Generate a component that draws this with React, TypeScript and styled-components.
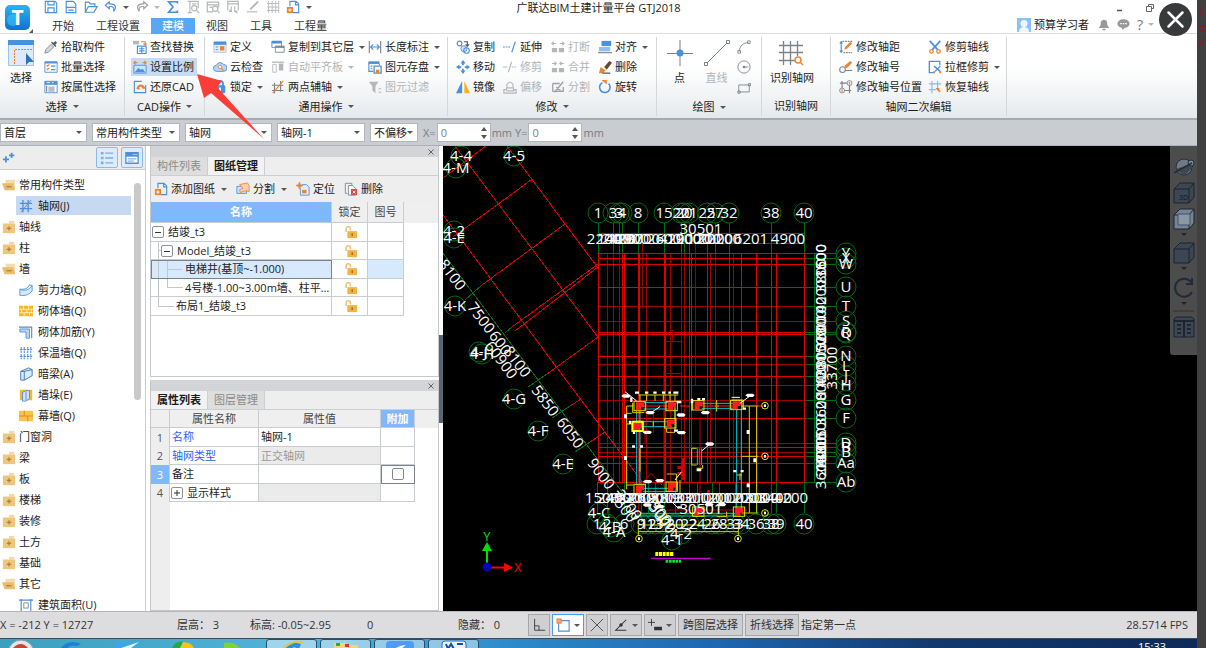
import React from 'react';
import styled, { createGlobalStyle, css } from 'styled-components';

const BLUE = '#4a90dc';
const ORANGE = '#f08331';
const GREY = '#7b838b';
const PALE = '#b4b7ba';

const GlobalStyle = createGlobalStyle`
  * { box-sizing: border-box; }
  body {
    margin: 0;
    background: #404040;
    color: #1c1c1c;
    font-family: "Open Sans", "Noto Sans CJK SC", sans-serif;
    font-size: 11px;
    line-height: 16px;
  }
  button, input, select {
    font: inherit;
    color: inherit;
    margin: 0;
    padding: 0;
    border: 0;
    background: none;
  }
  svg { display: block; flex: none; }
`;

/* ---------- icons ---------- */

const S = (p: React.SVGProps<SVGPathElement>) => <path fill="none" stroke={BLUE} strokeWidth="1.3" {...p} />;

const icons: Record<string, React.ReactNode> = {
  save: <><S d="M1.500 1.500h11l2 2v11h-13zM4.500 1.500v4h7v-4M4.500 14v-5h7v5" /></>,
  doc: <><S d="M2.500 14.500v-13h8l3 3v10zM2.500 8.500h11M5 11.500h6" /></>,
  open: <><S d="M1.500 14V2.500h4l2 2h5v3M1.500 14h10l3.500-6.500H5z" /></>,
  undo: <><S d="M6 2L1.500 6 6 10V7.500c5-.5 6 2 5 5.500 4-5 2-9-5-8.500z" /></>,
  redo: <><S stroke="#999da1" d="M10 2l4.500 4L10 10V7.500c-5-.5-6 2-5 5.500-4-5-2-9 5-8.500z" /></>,
  sum: <S strokeWidth="1.900" d="M13 4V2H3l5 6-5 6h10v-2" />,
  view1: <><S stroke={PALE} d="M2 1.500h12v8M4.500 1.500v13M2 14.500h5M7 4.500h5" /><circle cx="9.500" cy="9.500" r="3" fill="none" stroke={PALE} strokeWidth="1.300" /><S stroke={PALE} d="M12 12l3 3" /></>,
  view2: <><S stroke={PALE} d="M8 13.500H1.500v-11h13v6M1.500 5.500h13M4 8.500h3" /><circle cx="10.500" cy="10" r="3" fill="none" stroke={PALE} strokeWidth="1.300" /><S stroke={PALE} d="M13 12l2.500 3" /></>,
  view3: <><S stroke={PALE} d="M2 12V1.500h12V12M2 4.500h12M6 7v6H3.500M6 13l-2-2M10 7v6h3M10 13l3 2" /></>,
  pencil: <><path d="M5 9l8-8 1.500 1.500-8 8-2.500 1z" fill={PALE} /><S stroke={PALE} d="M1 13.500h12" /></>,
  mesh: <S stroke={PALE} strokeWidth="1" d="M3 1v14M7 1v14M11 1v14M14.500 1v14M1 4h14M1 8h14M1 12h14" />,
  addDoc: <><S d="M4.500 7V1.500h7l3 3v10H8M11 1.500v4h3" /><path d="M1 8h7v7H1z" fill={ORANGE} /><path d="M4.500 9.500v4M2.500 11.500h4" stroke="#fff" /></>,
  picker: <><path d="M1 15l1-4 6-6 3 3-6 6z" fill="#d4d8dc" stroke={GREY} /><path d="M8 3l5 5 1-1-1-2 2-2-2-2-2 2-2-1z" fill="#555b62" /></>,
  list: <><path d="M1 2h14v12H1z" fill="#fff" stroke={BLUE} /><path d="M1 2h14v2H1z" fill={BLUE} /><S stroke={ORANGE} d="M3 6l1 1 2-2M3 10l1 1 2-2" /><S d="M8 7h5M8 11h5" /></>,
  attr: <><path d="M1 1.500h14v13H1z" fill="#fff" stroke={BLUE} /><path d="M1 1.500h14v4H1z" fill={BLUE} /><path d="M3 3h4M9 3h2" stroke="#fff" /><path d="M5 7.500h7v6H5z" fill="#b9bec3" /><S stroke={GREY} d="M3 6.500v7" /></>,
  find: <><path d="M0 1h7v4H0z" fill={PALE} /><S stroke={ORANGE} d="M9 2h5v4M12 4l2 2 1.500-2" /><S d="M5 7h10v8.500H5zM7 10h6M7 12.500h6M10 8v7" /></>,
  scale: <><S stroke={ORANGE} d="M1 3h4M3 1L1 3l2 2M15 3h-4M13 1l2 2-2 2" /><path d="M1 6h14v9H1z" fill="#cde2fa" stroke={BLUE} /><path d="M2 14l4-5 3 2 2-1 3 4z" fill={BLUE} /></>,
  restore: <><S d="M10 1.500H1.500v13h13V6" /><path d="M4 10a5 5 0 0110 0h-3a3 3 0 00-4-2l1 3-5-1z" fill={ORANGE} /></>,
  define: <><path d="M1 2h14v12H1z" fill="#e7f1fc" stroke="#9fc5ee" /><path d="M1 2h14v3.500H1z" fill={BLUE} /><path d="M8 7h5v5H8z" fill={ORANGE} /><S strokeWidth="1" d="M3 8h3M3 11h3" /></>,
  cloud: <><path d="M4 13a3.500 3.500 0 010-7 4.500 4.500 0 018-1 4 4 0 010 8z" fill="#b7d5f6" stroke={BLUE} /><circle cx="8" cy="8" r="2" fill="#fff" stroke={ORANGE} /><S stroke={ORANGE} d="M9.500 9.500L12 12" /></>,
  lock: <><S strokeWidth="2" d="M4.500 7V4.500a3.500 3.500 0 017 0V7" /><rect x="2" y="6" width="12" height="9" rx="1.500" fill={BLUE} /><path d="M8 8.500v4" stroke="#fff" strokeWidth="2" /></>,
  copyLayer: <><path d="M1 1.500h11v7H1z" fill="#fff" stroke={BLUE} /><path d="M1 1h11v3H1z" fill={BLUE} /><path d="M5 7h10v7H5z" fill="#fff" stroke={GREY} /><path d="M5 7h10v2H5z" fill={GREY} /></>,
  alignSlab: <><path d="M1 2.500h14" stroke={PALE} strokeWidth="1.500" /><path d="M2 5h4v9H2z" fill="none" stroke={PALE} /><path d="M9 4h5v8H9z" fill={PALE} /></>,
  auxAxis: <><S stroke={GREY} d="M4 3v12M11 1v12M1 6h13M1 12h13" /><S stroke={ORANGE} d="M2 15L14 1" /></>,
  length: <><S stroke={GREY} d="M1.500 1v14M14.500 1v14" /><S d="M3 8h10M6 5L3 8l3 3M10 5l3 3-3 3" /></>,
  saveElem: <><path d="M1 1.500h12v3H1z" fill={BLUE} /><S d="M1 2v11h5M13 4v2M3 7h2M3 10h2" /><path d="M7 7h8v8H7z" fill="#fff" stroke={BLUE} strokeWidth="1.500" /><path d="M9 11h4v4H9z" fill={ORANGE} /></>,
  filter: <><path d="M1 2h11L8.500 7v8L5 12V7z" fill={PALE} /><S stroke={PALE} d="M12 10h3M12 14h3" /></>,
  copy: <><circle cx="4" cy="4" r="2.700" fill="none" stroke={GREY} strokeWidth="1.300" /><S stroke="#555" d="M9 2h4v4M11 5l2 2 2-2" /><circle cx="9" cy="10" r="3.500" fill="#cfe3f9" stroke={BLUE} /><circle cx="12" cy="12" r="3.200" fill="none" stroke={BLUE} strokeWidth="1.300" /></>,
  move: <path d="M8 0l3 4H9v2H7V4H5zM8 16l3-4H9v-2H7v2H5zM0 8l4-3v2h2v2H4v2zM16 8l-4-3v2h-2v2h2v2z" fill={BLUE} />,
  mirror: <><path d="M7 1v14H0z" fill={BLUE} /><path d="M9.500 1v14H16z" fill="#ffb21c" /></>,
  extend: <><S strokeDasharray="2 1" d="M0 8h9" /><S stroke={BLUE} d="M10 14l4-12" /></>,
  trim: <><S stroke={PALE} d="M0 8h5M6 14l4-12" /><S stroke={PALE} strokeDasharray="2 1" d="M10 8h6" /></>,
  offset: <><S stroke={PALE} d="M5 8a3.500 3.500 0 116 0M1 11h3V9h8v2h3v4H1zM4 12.500h9" /></>,
  breakIt: <><path d="M1 9h6v5H1zM9 9h6v5H9z" fill={PALE} /><S stroke={PALE} d="M1 4h5M3 2L1 4l2 2M15 4h-5M13 2l2 2-2 2" /></>,
  merge: <><path d="M1 9h6v5H1zM9 9h6v5H9z" fill={PALE} /><S stroke={PALE} d="M1 4h5M4 2l2 2-2 2M15 4h-5M12 2l-2 2 2 2" /></>,
  split: <><S stroke="#9da1a5" strokeWidth="1.500" d="M2 4h8M2 4v9M2 13h12V8M4 14L14 2M6 8l5 4" /></>,
  alignTo: <><path d="M4 1h11v6H4z" fill={BLUE} /><path d="M1 8h13v5H1z" fill="#90bff2" /><S stroke={GREY} d="M0 14.500h16" /></>,
  erase: <><path d="M7 8l6-7 3 2-6 8z" fill="#6e4529" /><path d="M3 8l6 4-4 3H1z" fill={ORANGE} /><S stroke="#444" d="M5 15h9" /></>,
  rotate: <><S strokeWidth="1.800" d="M5 3a6 6 0 107 1" /><path d="M4 0h6v5z" fill={ORANGE} /></>,
  arc: <><S stroke={GREY} strokeWidth="1" d="M2.500 13C3 7 7 3 13 3M1 12h3v3H1zM12 1h3v3h-3z" /></>,
  circle: <><circle cx="8" cy="8" r="7" fill="none" stroke={GREY} /><circle cx="8" cy="8" r="1.500" fill={GREY} /><S stroke={GREY} strokeWidth="1" d="M8 8h5" /></>,
  rect: <S stroke={GREY} strokeWidth="1" d="M2 4.500h12v8H2zM1 11.500h2.500V14H1zM13 3h2.500v2.500H13z" />,
  axisDist: <><S d="M2.500 2v12M1 4l1.500-2L4 4M1 12l1.500 2L4 12" /><S stroke={GREY} strokeDasharray="2 1" d="M4 1.500h11M5 14.500h10" /><path d="M6 11l1-3 6-6 2 2-6 6z" fill={ORANGE} /></>,
  axisNo: <><circle cx="4" cy="11" r="3.200" fill="none" stroke={GREY} strokeWidth="1.200" /><S stroke={GREY} d="M7 12h8" /><path d="M6 9l1-3 6-5 2 2-6 6z" fill={ORANGE} /></>,
  axisPos: <><circle cx="3.500" cy="12" r="2.800" fill="none" stroke={GREY} /><circle cx="12" cy="3.500" r="2.800" fill="none" stroke={GREY} /><path d="M3.500 10.500v3M12 2v3" stroke={ORANGE} strokeWidth="1.500" /><S stroke={GREY} d="M3.500 9V1M1 3.500h8M6 12h8M12 6v9" /></>,
  scissors: <><S strokeWidth="2" d="M2 1l9 10M14 1L5 11" /><circle cx="4" cy="13" r="2" fill="none" stroke={ORANGE} strokeWidth="1.500" /><circle cx="12" cy="13" r="2" fill="none" stroke={ORANGE} strokeWidth="1.500" /></>,
  boxTrim: <><S strokeWidth="1.500" d="M7 14.500H1.500v-13h12V6" /><S stroke={BLUE} strokeWidth="1.600" d="M7 7l7 6M14 7l-6 6" /><circle cx="7" cy="14" r="1.300" fill={ORANGE} /><circle cx="14" cy="14" r="1.300" fill={ORANGE} /></>,
  axisBack: <><S stroke="#8fb8e4" d="M4.500 1v14M11 1v8M1 4.500h14M1 11h8" /><path d="M9 9h4v3h2l-2 2-4-4z" fill={ORANGE} /></>,
  axis: <><S strokeWidth="1.500" d="M4.500 1v14M10.500 1v14M1 5h14M1 11h14" /><S stroke={GREY} strokeWidth="1" d="M2 15L14 1" /></>,
  folder: <><path d="M8 1h6v3H8z" fill="#f3d9a4" /><path d="M1 4h14v11H1z" fill="#eec67e" /><path d="M8 7v5M5.500 9.500h5" stroke="#a9813d" strokeWidth="1.400" /></>,
  folderOpen: <><path d="M4 2h11v11H4z" fill="#f4dcae" /><path d="M0 6h13l2 8H3z" fill="#e9bd6f" /><path d="M5 10h6" stroke="#a9813d" strokeWidth="1.400" /></>,
  wall: <path d="M1 7c6 1 9-1 11-5l3 1v6c-3 4-7 6-14 5zM1 7l2 1c6 1 9-1 12-5" fill="#d9e9fb" stroke={BLUE} />,
  brick: <><path d="M0 2h16v12H0z" fill="#fbb423" /><path d="M0 6h16M0 10h16M5 2v4M11 2v4M3 6v4M9 6v4M14 6v4M6 10v4M12 10v4" stroke="#fff2cf" /></>,
  rebar: <><S stroke={GREY} d="M0 2.500h14.500V15" /><path d="M1 4.500h11V15H8V8H1z" fill="#b9d6f7" stroke={BLUE} /></>,
  insul: <S strokeWidth="1.200" strokeDasharray="3 1" d="M2.500 1v14M6 1v14M10 1v14M13.500 1v14M1 4h14M1 12h14" />,
  beam: <><path d="M2 5l9-4 4 2v7l-9 5H2z" fill="#dcebfc" stroke="#356fae" /><path d="M2 5h4l9-2M6 5v10" fill="none" stroke="#356fae" /></>,
  pier: <><path d="M1 2h14v12H1z" fill="#fbb423" /><path d="M4 5l4-2h4v9l-4 3H4z" fill="#cde2fa" stroke={BLUE} /><path d="M8 4v10" stroke={BLUE} /></>,
  curtain: <><path d="M0 2h16v12H0z" fill="#fbc34c" /><path d="M0 8h16M6 2v6M10 8v6" stroke="#d58b12" /></>,
  area: <><S d="M2.500 1v14M13.500 1v14M0 2.500h16" /><S stroke={GREY} strokeWidth="1" d="M5.500 5.500h5v6h-5z" /></>,
  splitDoc: <><path d="M1 5h11v8H1z" fill="#cfe3f9" stroke={BLUE} /><path d="M4 3l9-2 2 3v7l-4-1-6 2-1-3 4-2z" fill="#fbd0ad" stroke={ORANGE} /></>,
  locate: <><path d="M7 3h5l3 3v9H5V7" fill="#e2eefc" stroke={BLUE} /><path d="M4 0l1 3 3 1-3 1-1 3-1-3-3-1 3-1z" fill={ORANGE} stroke={ORANGE} /><path d="M7 9h5v4H7z" fill={ORANGE} /></>,
  delDoc: <><path d="M4 13H1.500V1.500H9V4M5 4h5l3 3v8H5z" fill="#f2f4f6" stroke={GREY} /><path d="M8 8h7v7H8z" fill="#d94b4b" /><path d="M10 10l3 3M13 10l-3 3" stroke="#fff" /></>,
  unlock: <><path d="M3.500 8V4.500a2.500 2.500 0 015 0V6" fill="none" stroke="#eebf76" strokeWidth="1.700" /><path d="M5 7h11v8H5z" fill="#f2b347" /><path d="M10.500 9.500v3" stroke="#976011" strokeWidth="1.500" /></>,
  add: <path d="M4.500 6v7M1 9.500h7M11 2v6M8 5h6" stroke={BLUE} strokeWidth="2" />,
  bell: <><path d="M8 1c-4 0-4.500 4-4.500 7L1 12h14l-2.500-4C12.500 5 12 1 8 1z" fill="#999" /><path d="M6 13h4v2H6z" fill="#999" /></>,
  chat: <><ellipse cx="8" cy="7" rx="7.500" ry="5.500" fill="#999" /><path d="M6 11h4l-3 4z" fill="#999" /><path d="M4 7h2M7 7h2M10 7h2" stroke="#fff" strokeWidth="1.500" /></>,
  listView: <><path d="M1 1h3v3H1zM1 6.500h3v3H1zM1 12h3v3H1z" fill="#76aef0" /><path d="M6 2.500h9M6 8h9M6 13.500h9" stroke="#76aef0" strokeWidth="1.500" /></>,
  winView: <><path d="M1 2h14v12H1z" fill="#fff" stroke={BLUE} strokeWidth="1.500" /><path d="M1 2h14v4.500H1z" fill={BLUE} /><path d="M9 4h1M11 4h1M13 4h1" stroke="#fff" /><S d="M3 9h10M3 11.500h7" strokeWidth="1" /></>,
  ortho: <path d="M3 1v13h12M3 9h5v5" fill="none" stroke="#333" />,
  snapRect: <><path d="M3 3h12v12H3z" fill="#fff" stroke={BLUE} strokeWidth="1.300" /><path d="M1 1h5v5H1z" fill="#f3a276" stroke={ORANGE} /></>,
  crossX: <path d="M1 1l14 14M15 1L1 15" stroke="#444" />,
  angle: <><path d="M14 2L2 14h12" fill="none" stroke="#333" strokeWidth="1.200" /><circle cx="8" cy="8" r="2" fill="#333" /></>,
  plusMinus: <><path d="M4 1v8M0 5h8" stroke="#333" /><path d="M7 10h9v4H7z" fill="#333" /></>,
};

const Icon = ({ name, size = 14 }: { name: string; size?: number }) => (
  <svg width={size} height={size} viewBox="0 0 16 16" aria-hidden="true">{icons[name]}</svg>
);

const Caret = styled.span<{ $color?: string }>`
  flex: none;
  width: 0;
  height: 0;
  border: 3px solid transparent;
  border-top-color: ${p => p.$color || '#555'};
  border-bottom: 0;
`;

/* ---------- shell ---------- */

const Page = styled.div`
  position: relative;
  display: flex;
  height: 100vh;
  overflow: hidden;
  white-space: nowrap;
`;
const Backdrop = styled.aside`
  flex: 0 0 9px;
  overflow: hidden;
  background: #404040;
`;
const Program = styled.main`
  flex: 1;
  min-width: 0;
  display: flex;
  flex-direction: column;
  background: #fff;
`;

/* ---------- title and menu ---------- */

const Header = styled.header`
  flex: none;
  display: grid;
  grid-template-columns: minmax(0, 1fr) auto minmax(0, 1fr);
  height: 34px;
  border-bottom: 1px solid #d9dcdf;
`;
const Brand = styled.div`
  display: flex;
`;
const Logo = styled.svg`
  margin-right: 3px;
`;
const Stack = styled.div`
  display: flex;
  flex-direction: column;
  justify-content: space-between;
`;
const QuickBar = styled.div`
  display: flex;
  align-items: center;
  gap: 6px;
  height: 14px;
  padding-left: 3px;
`;
const IconButton = styled.button`
  display: flex;
  align-items: center;
  gap: 5px;
`;
const HelpButton = styled(IconButton)`
  color: #777;
  font-size: 14px;
`;
const Menu = styled.nav`
  display: flex;
`;
const MenuTab = styled.button<{ $active?: boolean }>`
  height: 16px;
  padding: 0 11px;
  color: ${p => (p.$active ? '#fff' : '#333')};
  background: ${p => (p.$active ? '#5aa7f7' : 'transparent')};
`;
const Title = styled.h1`
  margin: 0;
  font-size: 11px;
  line-height: 15px;
  font-weight: 400;
`;
const Account = styled.div`
  display: flex;
  flex-direction: column;
  align-items: flex-end;
  gap: 2px;
  padding-right: 43px;
`;
const AccountRow = styled.div`
  display: flex;
  align-items: center;
  gap: 7px;
  height: 15px;
`;
const User = styled.button`
  display: flex;
  align-items: center;
  gap: 3px;
  margin-right: 2px;
`;

const quick = ['save', 'doc', 'open', 'undo', 'redo', 'sum', 'view1', 'view2', 'view3', 'pencil', 'mesh', 'addDoc'];
const menu = ['开始', '工程设置', '建模', '视图', '工具', '工程量'];

const TopBar = () => (
  <Header>
    <Brand>
      <Logo width="38" height="34" viewBox="0 0 38 34" role="img" aria-label="GTJ">
        <defs>
          <linearGradient id="logo" x1="0" y1="0" x2="0" y2="1">
            <stop offset="0" stopColor="#25b6f3" />
            <stop offset="1" stopColor="#146fd0" />
          </linearGradient>
        </defs>
        <rect x="5" y="5" width="25" height="25" rx="5" fill="url(#logo)" />
        <circle cx="13" cy="20" r="6" fill="#39c6f6" opacity=".6" />
        <text x="17.500" y="25" textAnchor="middle" fontSize="21" fontWeight="700" fill="#fff">T</text>
        <path d="M33 29v4h-4z" fill="#555" />
      </Logo>
      <Stack>
        <QuickBar>
          {quick.map(n => (
            <IconButton key={n} aria-label={n}>
              <Icon name={n} />
              {(n === 'undo' || n === 'redo') && <Caret $color={n === 'redo' ? PALE : '#555'} />}
            </IconButton>
          ))}
          <Caret />
        </QuickBar>
        <Menu>{menu.map(m => <MenuTab key={m} $active={m === '建模'}>{m}</MenuTab>)}</Menu>
      </Stack>
    </Brand>
    <Title>广联达BIM土建计量平台 GTJ2018</Title>
    <Account>
      <AccountRow>
        <IconButton aria-label="最小化"><svg width="22" height="12"><path d="M0 8.500h5" stroke="#555" strokeWidth="1.500" /></svg></IconButton>
        <IconButton aria-label="还原"><svg width="8" height="8"><path d="M2.500 2V.5h5v4H6M.5 2.500h5v5h-5z" fill="none" stroke="#666" /></svg></IconButton>
      </AccountRow>
      <AccountRow>
        <User>
          <svg width="14" height="14"><rect width="14" height="14" fill="#8cc1f5" /><circle cx="7" cy="5.500" r="3.500" fill="#eef7ff" /><path d="M2 14q0-5 5-5t5 5z" fill="#eef7ff" /></svg>
          预算学习者
        </User>
        <Icon name="bell" size={12} />
        <Icon name="chat" size={13} />
        <HelpButton aria-label="帮助">?<Caret $color={PALE} /></HelpButton>
      </AccountRow>
    </Account>
  </Header>
);

/* ---------- ribbon ---------- */

const RibbonBar = styled.section`
  flex: none;
  display: flex;
  height: 86px;
  padding: 3px 0 2px;
  background: linear-gradient(#fff 40%, #e6e9ec);
  border-bottom: 2px solid #a5aaaf;
`;
const Group = styled.div<{ $width: number }>`
  flex: 0 0 ${p => p.$width}px;
  display: flex;
  flex-direction: column;
  border-right: 1px solid #d5d8db;
`;
const GroupBody = styled.div<{ $pad: number }>`
  display: flex;
  height: 61px;
  padding-left: ${p => p.$pad}px;
`;
const GroupName = styled.div`
  display: flex;
  align-items: center;
  justify-content: center;
  gap: 5px;
  height: 20px;
`;
const ToolGrid = styled.div<{ $cols: string }>`
  display: grid;
  grid-auto-flow: column;
  grid-template-rows: repeat(3, 20px);
  grid-template-columns: ${p => p.$cols};
`;
const ToolButton = styled.button<{ $active?: boolean }>`
  display: flex;
  align-items: center;
  justify-self: start;
  align-self: center;
  gap: 3px;
  height: 18px;
  padding: 0 3px 0 2px;
  ${p => p.$active && css`background: #c8dbf3;`}
  &:disabled { color: #b2b4b6; }
  & > ${Caret} { margin-left: 2px; }
`;
const BigButton = styled.button<{ $width: number }>`
  display: flex;
  flex-direction: column;
  align-items: center;
  justify-content: space-between;
  width: ${p => p.$width}px;
  height: 49px;
  padding-top: 3px;
  &:disabled { color: #b2b4b6; }
`;
const ShapeColumn = styled.div`
  display: flex;
  flex-direction: column;
  justify-content: space-around;
  height: 61px;
  padding-left: 2px;
`;

type ToolDef = [icon: string, label: string, flags?: string];
const Tools = ({ cols, items }: { cols: string; items: ToolDef[] }) => (
  <ToolGrid $cols={cols}>
    {items.map(([icon, label, f = '']) => (
      <ToolButton key={label} disabled={f.includes('x')} $active={f.includes('a')}>
        <Icon name={icon} />
        {label}
        {f.includes('d') && <Caret $color={f.includes('x') ? PALE : '#555'} />}
      </ToolButton>
    ))}
  </ToolGrid>
);

const Ribbon = () => (
  <RibbonBar>
    <Group $width={125}>
      <GroupBody $pad={0}>
        <BigButton $width={42}>
          <svg width="26" height="27" viewBox="0 0 26 27">
            <path d="M.5.500h25v25H.500z" fill="#dceafb" stroke="#9ec4ee" /><path d="M0 0h26v5H0z" fill={BLUE} />
            <path d="M6.500 24V9.500H25" fill="none" stroke={ORANGE} strokeDasharray="2 1" /><path d="M18 13v12l3-3h5z" fill="#2f73bd" />
          </svg>
          选择
        </BigButton>
        <Tools cols="80px" items={[['picker', '拾取构件'], ['list', '批量选择'], ['attr', '按属性选择']]} />
      </GroupBody>
      <GroupName>选择 <Caret /></GroupName>
    </Group>
    <Group $width={80}>
      <GroupBody $pad={6}>
        <Tools cols="70px" items={[['find', '查找替换'], ['scale', '设置比例', 'a'], ['restore', '还原CAD']]} />
      </GroupBody>
      <GroupName>CAD操作 <Caret /></GroupName>
    </Group>
    <Group $width={243}>
      <GroupBody $pad={6}>
        <Tools
          cols="58px 97px 78px"
          items={[
            ['define', '定义'], ['cloud', '云检查'], ['lock', '锁定', 'd'],
            ['copyLayer', '复制到其它层', 'd'], ['alignSlab', '自动平齐板', 'xd'], ['auxAxis', '两点辅轴', 'd'],
            ['length', '长度标注', 'd'], ['saveElem', '图元存盘', 'd'], ['filter', '图元过滤', 'x'],
          ]}
        />
      </GroupBody>
      <GroupName>通用操作 <Caret /></GroupName>
    </Group>
    <Group $width={208}>
      <GroupBody $pad={6}>
        <Tools
          cols="47px 48px 47px 60px"
          items={[
            ['copy', '复制'], ['move', '移动'], ['mirror', '镜像'],
            ['extend', '延伸'], ['trim', '修剪', 'x'], ['offset', '偏移', 'x'],
            ['breakIt', '打断', 'x'], ['merge', '合并', 'x'], ['split', '分割', 'x'],
            ['alignTo', '对齐', 'd'], ['erase', '删除'], ['rotate', '旋转'],
          ]}
        />
      </GroupBody>
      <GroupName>修改 <Caret /></GroupName>
    </Group>
    <Group $width={105}>
      <GroupBody $pad={4}>
        <BigButton $width={37}>
          <svg width="26" height="27"><path d="M13 0v26M0 13.500h26" stroke={GREY} /><circle cx="13" cy="13" r="3.500" fill={BLUE} /></svg>
          点
        </BigButton>
        <BigButton $width={37} disabled>
          <svg width="26" height="27"><path d="M3 23L23 3M.5 22.500h3v3h-3zM22.500.500h3v3h-3z" stroke={GREY} fill="#fff" /></svg>
          直线
        </BigButton>
        <ShapeColumn>
          {[['arc', '圆弧'], ['circle', '圆'], ['rect', '矩形']].map(([n, l]) => <IconButton key={n} aria-label={l}><Icon name={n} /></IconButton>)}
        </ShapeColumn>
      </GroupBody>
      <GroupName>绘图 <Caret /></GroupName>
    </Group>
    <Group $width={69}>
      <GroupBody $pad={4}>
        <BigButton $width={52}>
          <svg width="26" height="27">
            <path d="M4.500 1v24M11.500 1v24M18.500 1v15M0 5.500h24M0 12.500h24M0 20.500h16" stroke={GREY} fill="none" strokeWidth="1.300" />
            <circle cx="19" cy="20" r="3" fill="none" stroke={ORANGE} strokeWidth="1.500" /><path d="M21 22l3 3" stroke={ORANGE} strokeWidth="1.500" />
          </svg>
          识别轴网
        </BigButton>
      </GroupBody>
      <GroupName>识别轴网</GroupName>
    </Group>
    <Group $width={176}>
      <GroupBody $pad={6}>
        <Tools
          cols="89px 78px"
          items={[
            ['axisDist', '修改轴距'], ['axisNo', '修改轴号'], ['axisPos', '修改轴号位置'],
            ['scissors', '修剪轴线'], ['boxTrim', '拉框修剪', 'd'], ['axisBack', '恢复轴线'],
          ]}
        />
      </GroupBody>
      <GroupName>轴网二次编辑</GroupName>
    </Group>
  </RibbonBar>
);

/* ---------- filter bar ---------- */

const FilterBar = styled.div`
  flex: none;
  display: flex;
  align-items: center;
  height: 26px;
  background: #c9ccd1;
  border-bottom: 1px solid #aeb2b8;
  color: #7a7d82;
`;
const Combo = styled.label<{ $width: number }>`
  display: flex;
  align-items: center;
  width: ${p => p.$width}px;
  height: 19px;
  margin-right: 5px;
  padding-right: 4px;
  background: #fff;
  border: 1px solid #b3b7bc;
  color: #1c1c1c;
  & select {
    flex: 1;
    min-width: 0;
    height: 17px;
    padding-left: 3px;
    appearance: none;
    outline: 0;
  }
`;
const NumberBox = styled.label`
  display: flex;
  align-items: center;
  gap: 1px;
  margin-right: 3px;
`;
const NumberField = styled.span`
  display: flex;
  align-items: center;
  width: 54px;
  height: 19px;
  padding-right: 3px;
  background: #fff;
  border: 1px solid #b3b7bc;
  & input { flex: 1; min-width: 0; padding-left: 3px; height: 17px; outline: 0; }
`;

const Filters = () => (
  <FilterBar>
    {([['首层', 87], ['常用构件类型', 88], ['轴网', 87], ['轴网-1', 88], ['不偏移', 48]] as [string, number][]).map(([v, w]) => (
      <Combo key={v} $width={w}>
        <select aria-label={v} defaultValue={v}><option>{v}</option></select>
        <Caret />
      </Combo>
    ))}
    {['X=', 'Y='].map(l => (
      <NumberBox key={l}>
        {l}
        <NumberField>
          <input type="text" defaultValue="0" />
          <svg width="6" height="12"><path d="M0 4h6L3 0zM0 8h6l-3 4z" fill="#555" /></svg>
        </NumberField>
        mm
      </NumberBox>
    ))}
  </FilterBar>
);

/* ---------- component tree ---------- */

const Workspace = styled.div`
  flex: 1;
  min-height: 0;
  display: flex;
`;
const Sidebar = styled.aside`
  flex: 0 0 146px;
  display: flex;
  flex-direction: column;
  overflow: hidden;
  border-right: 1px solid #c9ccd0;
`;
const SideHead = styled.div`
  flex: none;
  display: flex;
  align-items: center;
  gap: 3px;
  height: 24px;
  padding: 0 2px;
  background: #ededee;
  border-bottom: 1px solid #c9ccd0;
`;
const Spacer = styled.span`
  flex: 1;
`;
const ViewButton = styled.button`
  display: flex;
  align-items: center;
  justify-content: center;
  width: 22px;
  height: 21px;
  background: #dcecfd;
  border: 1px solid #8abaf2;
  border-radius: 2px;
`;
const SideBody = styled.div`
  flex: 1;
  min-height: 0;
  display: flex;
  padding-right: 4px;
`;
const Tree = styled.ul`
  flex: 1;
  margin: 0;
  padding: 5px 3px 0 0;
  list-style: none;
  overflow: hidden;
`;
const TreeItem = styled.li<{ $child: boolean; $selected: boolean }>`
  display: flex;
  align-items: center;
  gap: ${p => (p.$child ? 5 : 3)}px;
  height: 19px;
  margin: 0 0 2px ${p => (p.$child ? 16 : 0)}px;
  padding-left: ${p => (p.$child ? 3 : 2)}px;
  background: ${p => (p.$selected ? '#c6d9f0' : 'transparent')};
`;
const ScrollThumb = styled.div`
  width: 7px;
  height: 217px;
  margin-top: 13px;
  border-radius: 4px;
  background: #c9c9c9;
`;

const tree: [string, string, boolean?][] = [
  ['folderOpen', '常用构件类型'], ['axis', '轴网(J)', true], ['folder', '轴线'], ['folder', '柱'], ['folderOpen', '墙'],
  ['wall', '剪力墙(Q)', true], ['brick', '砌体墙(Q)', true], ['rebar', '砌体加筋(Y)', true], ['insul', '保温墙(Q)', true],
  ['beam', '暗梁(A)', true], ['pier', '墙垛(E)', true], ['curtain', '幕墙(Q)', true], ['folder', '门窗洞'], ['folder', '梁'],
  ['folder', '板'], ['folder', '楼梯'], ['folder', '装修'], ['folder', '土方'], ['folder', '基础'], ['folderOpen', '其它'],
  ['area', '建筑面积(U)', true],
];

const ComponentTree = () => (
  <Sidebar>
    <SideHead>
      <IconButton aria-label="新建"><Icon name="add" /></IconButton>
      <Spacer />
      <ViewButton aria-label="列表"><Icon name="listView" /></ViewButton>
      <ViewButton aria-label="窗口"><Icon name="winView" /></ViewButton>
    </SideHead>
    <SideBody>
      <Tree>
        {tree.map(([icon, label, child]) => (
          <TreeItem key={label} $child={!!child} $selected={label === '轴网(J)'}><Icon name={icon} />{label}</TreeItem>
        ))}
      </Tree>
      <ScrollThumb />
    </SideBody>
  </Sidebar>
);

/* ---------- dock panels ---------- */

const Dock = styled.div`
  flex: 0 0 293px;
  display: flex;
  flex-direction: column;
  gap: 3px;
  padding-left: 4px;
`;
const Panel = styled.section`
  flex: 1;
  min-height: 0;
  display: flex;
  flex-direction: column;
  background: #fff;
  border: 1px solid #c4c8cd;
  border-top: 0;
`;
const PanelHead = styled.div`
  flex: none;
  display: flex;
  justify-content: flex-end;
  height: 11px;
  padding: 1px 4px 0 0;
  background: #d2d4d8;
`;
const PanelTabs = styled.div`
  flex: none;
  display: flex;
  height: 19px;
  background: #eee;
  border-bottom: 1px solid #cbcfd3;
`;
const PanelTab = styled.button<{ $active?: boolean }>`
  width: 57px;
  background: ${p => (p.$active ? '#f2f2f2' : '#dedede')};
  border-right: 1px solid #cbcfd3;
  color: ${p => (p.$active ? '#1c1c1c' : '#8b8b8b')};
  font-weight: ${p => (p.$active ? 600 : 400)};
`;
const PanelTools = styled.div`
  flex: none;
  display: flex;
  align-items: center;
  gap: 9px;
  height: 26px;
  padding-left: 3px;
  background: #eee;
  & button { gap: 3px; }
  & ${Caret} { margin-left: 3px; }
`;
const TableArea = styled.div<{ $head: number }>`
  flex: 1;
  min-height: 0;
  background: linear-gradient(#efefef ${p => p.$head}px, #fff ${p => p.$head}px);
`;
const Table = styled.table<{ $width: number; $head: number }>`
  width: ${p => p.$width}px;
  table-layout: fixed;
  border-collapse: separate;
  border-spacing: 0;
  & th, & td {
    height: 18px;
    padding: 0 2px;
    border-right: 1px solid #c9ccd0;
    border-bottom: 1px solid #c9ccd0;
    font-weight: 400;
    line-height: 16px;
    text-align: left;
    overflow: hidden;
    text-overflow: ellipsis;
  }
  & thead th { height: ${p => p.$head}px; color: #444; background: #efefef; text-align: center; }
  & tbody tr:nth-child(odd) td, & tbody tr:nth-child(odd) th { height: 19px; }
`;
const HeadCell = styled.th<{ $hot?: boolean }>`
  ${p => p.$hot && css`&&& { color: #fff; background: #7fb9fb; font-weight: 600; }`}
`;
const Cell = styled.td<{ $tone?: 'link' | 'muted' | 'focus' | 'hot' | 'current' | 'fill' }>`
  ${p => p.$tone === 'link' && css`color: #2d62f5;`}
  ${p => p.$tone === 'muted' && css`color: #9a9a9a; background: #ebebeb;`}
  ${p => p.$tone === 'fill' && css`background: #ebebeb;`}
  ${p => (p.$tone === 'hot' || p.$tone === 'current') && css`background: #d6e9fd;`}
  ${p => (p.$tone === 'focus' || p.$tone === 'current') && css`outline: 1px solid #7d8288; outline-offset: -1px;`}
`;
const CellRow = styled.div`
  display: flex;
  align-items: center;
  justify-content: flex-start;
  height: 17px;
`;
const CellCenter = styled(CellRow)`
  justify-content: center;
`;
const CellText = styled.span`
  overflow: hidden;
  text-overflow: ellipsis;
`;
const Toggle = styled.button`
  flex: none;
  width: 12px;
  height: 12px;
  margin-right: 4px;
  border: 1px solid #8d9298;
  border-radius: 2px;
  background: #fff;
`;
const NameCell = styled(Cell)`
  &&& { padding: 0 0 0 1px; }
`;
const RowNo = styled.th<{ $hot?: boolean }>`
  &&& {
    text-align: center;
    border-bottom: 0;
    color: ${p => (p.$hot ? '#fff' : '#555')};
    background: ${p => (p.$hot ? '#7fb9fb' : '#eee')};
  }
`;
const RowMargin = styled.div`
  width: 19px;
  background: #eee;
  flex: 1;
`;
const PropertyArea = styled(TableArea)`
  display: flex;
  flex-direction: column;
`;
const Check = styled.input`
  width: 12px;
  height: 12px;
  appearance: none;
  border: 1px solid #888;
  border-radius: 2px;
  background: #fff;
`;
const Splitter = styled.div`
  flex: 0 0 4px;
  padding-top: 189px;
  &::before { content: ""; display: block; height: 88px; background: #5b6572; }
`;

const CloseMark = () => (
  <IconButton aria-label="关闭"><svg width="6" height="6"><path d="M.5.500l5 5M5.500.500l-5 5" stroke="#666" /></svg></IconButton>
);
const Minus = () => <svg width="10" height="10"><path d="M2 5h6" stroke="#333" strokeWidth="1" shapeRendering="crispEdges" /></svg>;
const Guide = ({ width, d }: { width: number; d: string }) => (
  <svg width={width} height="19"><path d={d} fill="none" stroke="#c3c6ca" shapeRendering="crispEdges" /></svg>
);

const drawings: [React.ReactNode, string][] = [
  [<Toggle aria-label="折叠"><Minus /></Toggle>, '结竣_t3'],
  [<><Guide width={9} d="M6.500 0v19M6 9.500h3" /><Toggle aria-label="折叠"><Minus /></Toggle></>, 'Model_结竣_t3'],
  [<Guide width={33} d="M6.500 0v19M15.500 0v19M15 9.500h15" />, '电梯井(基顶~-1.000)'],
  [<Guide width={33} d="M6.500 0v19M15.500 0v9.500h15" />, '4号楼-1.00~3.00m墙、柱平面'],
  [<Guide width={24} d="M6.500 0v9.500h15" />, '布局1_结竣_t3'],
];

const Panels = () => (
  <Dock>
    <Panel>
      <PanelHead><CloseMark /></PanelHead>
      <PanelTabs><PanelTab>构件列表</PanelTab><PanelTab $active>图纸管理</PanelTab></PanelTabs>
      <PanelTools>
        <IconButton><Icon name="addDoc" />添加图纸<Caret /></IconButton>
        <IconButton><Icon name="splitDoc" />分割<Caret /></IconButton>
        <IconButton><Icon name="locate" />定位</IconButton>
        <IconButton><Icon name="delDoc" />删除</IconButton>
      </PanelTools>
      <TableArea $head={21}>
        <Table $width={253} $head={21}>
          <colgroup><col width="181" /><col width="36" /><col width="36" /></colgroup>
          <thead><tr><HeadCell $hot>名称</HeadCell><HeadCell>锁定</HeadCell><HeadCell>图号</HeadCell></tr></thead>
          <tbody>
            {drawings.map(([lead, text], i) => (
              <tr key={text}>
                <NameCell $tone={i === 2 ? 'current' : undefined}>
                  <CellRow>{lead}<CellText>{text}</CellText></CellRow>
                </NameCell>
                <Cell><CellCenter><Icon name="unlock" /></CellCenter></Cell>
                <Cell $tone={i === 2 ? 'hot' : undefined} />
              </tr>
            ))}
          </tbody>
        </Table>
      </TableArea>
    </Panel>
    <Panel>
      <PanelHead><CloseMark /></PanelHead>
      <PanelTabs><PanelTab $active>属性列表</PanelTab><PanelTab>图层管理</PanelTab></PanelTabs>
      <PropertyArea $head={18}>
        <Table $width={264} $head={18}>
          <colgroup><col width="19" /><col width="89" /><col width="122" /><col width="34" /></colgroup>
          <thead><tr><HeadCell aria-label="序号" /><HeadCell>属性名称</HeadCell><HeadCell>属性值</HeadCell><HeadCell $hot>附加</HeadCell></tr></thead>
          <tbody>
            <tr><RowNo>1</RowNo><Cell $tone="link">名称</Cell><Cell>轴网-1</Cell><Cell /></tr>
            <tr><RowNo>2</RowNo><Cell $tone="link">轴网类型</Cell><Cell $tone="muted">正交轴网</Cell><Cell /></tr>
            <tr><RowNo $hot>3</RowNo><Cell>备注</Cell><Cell /><Cell $tone="focus"><CellCenter><Check type="checkbox" aria-label="附加" /></CellCenter></Cell></tr>
            <tr>
              <RowNo>4</RowNo>
              <NameCell><CellRow><Toggle aria-label="展开"><svg width="10" height="10"><path d="M2 5h6M5 2v6" stroke="#333" /></svg></Toggle>显示样式</CellRow></NameCell>
              <Cell $tone="fill" /><Cell />
            </tr>
          </tbody>
        </Table>
        <RowMargin />
      </PropertyArea>
    </Panel>
  </Dock>
);

/* ---------- drawing canvas ---------- */

const CanvasArea = styled.div`
  position: relative;
  flex: 1;
  min-width: 0;
  overflow: hidden;
  background: #000;
`;
const ViewTools = styled.div`
  position: absolute;
  top: 0;
  right: 0;
  display: flex;
  flex-direction: column;
  align-items: center;
  gap: 4px;
  width: 27px;
  height: 209px;
  padding-top: 10px;
  background: #4c4c4d;
  border-radius: 0 0 0 3px;
`;

const gridX = [598, 607, 613, 619, 622, 624, 638, 639, 646, 664, 665, 670, 681, 684, 689, 691, 707, 710, 715, 729, 733, 741, 756, 771, 776, 804];
const gridY = [253, 258, 264, 287, 306, 321, 332, 334, 356, 364, 376, 385, 400, 418, 443, 447, 452, 456, 463, 482];
const faintX = [607, 613, 619, 646, 670, 681, 684, 710, 715, 733];
const faintY = [306, 321, 364, 385, 400, 443, 452];
const topMarks: [number, string][] = [[598, '1'], [613, '3'], [619, '3'], [622, '4'], [638, '8'], [664, '15'], [681, '20'], [684, '20'], [689, '21'], [707, '25'], [715, '27'], [729, '32'], [771, '38'], [804, '40']];
const rightMarks: [number, string][] = [[253, 'Y'], [258, 'X'], [264, 'W'], [287, 'U'], [306, 'T'], [321, 'S'], [332, 'R'], [333, 'Q'], [356, 'N'], [366, 'L'], [376, 'J'], [385, 'H'], [400, 'G'], [418, 'F'], [443, 'D'], [447, 'B'], [452, 'B'], [463, 'Aa'], [482, 'Ab']];
const bottomMarks: [number, string][] = [[597, '1'], [607, '2'], [624, '6'], [641, '9'], [648, '12'], [655, '13'], [664, '17'], [675, '20'], [689, '22'], [697, '24'], [712, '26'], [719, '28'], [735, '33'], [741, '34'], [756, '36'], [771, '38'], [776, '39'], [804, '40']];
const topDims: [number, string][] = [[604, '2200'], [614, '1400'], [619, '2400'], [626, '1200'], [632, '1900'], [643, '3700'], [664, '2600'], [676, '4200'], [684, '1900'], [693, '2000'], [704, '1200'], [716, '2000'], [724, '2200'], [751, '6201'], [788, '4900']];
const bottomDims: [number, string][] = [[602, '1500'], [614, '2400'], [623, '4200'], [634, '2200'], [646, '2600'], [656, '1900'], [668, '3800'], [680, '1900'], [692, '3300'], [703, '2100'], [715, '1200'], [727, '2000'], [740, '1200'], [751, '2200'], [762, '3000'], [775, '3400'], [791, '4200']];
const diagMarks: [number, number, string][] = [[461, 156, '4-4'], [456, 168, '4-M'], [514, 156, '4-5'], [454, 231, '4-2'], [454, 238, '4-E'], [455, 306, '4-K'], [479, 352, '4-J'], [482, 354, '4-H'], [514, 399, '4-G'], [538, 431, '4-F'], [563, 464, '4-E'], [599, 513, '4-C'], [614, 532, '4-A'], [610, 527, '4-B'], [681, 534, '4-2'], [672, 540, '4-1']];
const diagDims: [number, number, string][] = [[452, 275, '8100'], [481, 318, '7500'], [500, 343, '600'], [517, 362, '8100'], [501, 360, '60900'], [545, 401, '5850'], [570, 433, '6050'], [601, 474, '9000'], [628, 505, '2100'], [623, 507, '7500'], [658, 510, '1500'], [662, 518, '3000']];
const tags: [number, number][] = [[198, 78], [270, 128], [363, 135], [364, 188], [262, 187], [436, 128], [570, 76], [449, 222], [263, 335], [299, 332], [262, 405], [300, 410], [447, 404], [485, 404]];
const columns: [number, number][] = [[240, 108], [336, 108], [234, 170], [332, 160], [240, 357], [336, 350], [416, 106], [530, 105], [416, 425], [538, 425]];
const bubbles: [number, number][] = [[615, 107], [615, 259], [615, 429], [237, 506], [534, 506]];

const lines = (xs: number[], from: number, to: number) => xs.map(x => `M${x}.500 ${from}V${to}`).join('');
const rows = (ys: number[], from: number, to: number) => ys.map(y => `M${from} ${y}.500H${to}`).join('');

const Plan = () => (
  <g transform="translate(560 370) scale(.3333)" fill="none" strokeWidth="3">
    <path stroke="#b00" d="M420 150v220M236 40v390M312 0v350M220 259h200M240 345l33-35 33 35M320 420h240M255 155v65M280 130v60" />
    <path stroke="#d00" strokeWidth="8" d="M370 265v65M352 292h24M352 310h24M445 360v40" />
    <path stroke="#00c8d2" d="M230 115v230M240 115v230M250 98h90M250 117h90M345 115v50M235 155h110M245 170h90M425 100h95M425 115h95M530 115v300M544 115v300M250 355h90M250 365h80M240 430h300M240 438h300M412 235v50M425 235v50" />
    <path stroke="#d7d700" d="M200 108v250M200 108h20M215 130h-18M235 75h120M240 75v18M260 75v18M285 75v18M310 75v18M330 75v18M345 75v18M568 108v320M590 108v320M545 108h50M545 259h50M545 429h50M235 465h300M235 485h300M235 465v30M535 465v30M345 100v80M395 92v30M395 92h25M320 175v12h25M218 98v30h35M395 235v50h15M395 235h15M540 310v20M320 312h30v50M360 330v55M240 235v70M470 90v35M280 155v14M515 90h35v25M200 345h20M205 375h30v15M410 295h18v-10M470 440h30v-15M290 445h30v-15M200 162h20M465 108h12M530 315h16" />
    <path stroke="#ff2020" d="M250 108h90M425 108h95M590 108h22M360 108h30M418 235v50" strokeWidth="3" />
    {columns.map(([x, y]) => <g key={`${x}-${y}`}><rect x={x - 18} y={y - 14} width="34" height="28" stroke="#e6e600" /><path d={`M${x - 12} ${y - 11}h24v14h-9v10h-15z`} fill="#ff1c1c" stroke="none" /></g>)}
    <rect x="218" y="155" width="30" height="28" stroke="#ff0" strokeWidth="6" />
    {tags.map(([x, y]) => <path key={`${x}-${y}`} d={`M${x - 14} ${y}l6-5h16l6 4-5 6h-16z`} fill="#fff" stroke="none" />)}
    <path stroke="#fff" d="M195 65l35 28M270 130l30-20M570 78l-30 22M450 222l-24 20M345 330l20-25M235 375l20 25M330 390l25 25M540 82h-25" />
    <path stroke="#fff" strokeWidth="7" d="M340 68h15M225 68h12M255 68h10M280 68h10M306 68h10M325 68h8M214 82v14M222 182v10M210 152v10M350 96h14M342 182h12M208 388h10M226 440h10M352 412h14M548 116h10M396 86v14M410 300h14" />
    <path fill="#fff" stroke="none" d="M192 133h9v12h-9zM192 258h9v12h-9zM560 180h9v12h-9zM580 265h9v12h-9zM560 340h9v12h-9zM216 226h9v7h-9zM240 226h9v7h-9zM412 84h9v7h-9zM426 84h9v7h-9zM520 300h9v7h-9zM542 300h9v7h-9z" />
    {bubbles.map(([x, y]) => <g key={`${x}-${y}`}><circle cx={x} cy={y} r="10" stroke="#e6e600" /><path d={`M${x - 3} ${y - 4}h6v8h-6z`} fill="#fff" stroke="none" /></g>)}
    <path stroke="#ffff00" strokeWidth="12" strokeDasharray="9 2" d="M286 552h56" />
    <path stroke="#00e628" strokeWidth="9" strokeDasharray="8 2" d="M317 574h46" />
    <path stroke="#c800c8" strokeWidth="4" d="M273 565h180" />
  </g>
);

const Drawing = () => (
  <svg width="754" height="466" viewBox="443 146 754 466" role="img" aria-label="轴网平面图">
    <g fill="none" stroke="#d80000" shapeRendering="crispEdges">
      <path stroke="#a00000" d={lines(faintX, 253, 482) + rows(faintY, 598, 804)} />
      <path stroke="#e00000" d={lines(gridX.filter(x => !faintX.includes(x)), 253, 483) + rows(gridY.filter(y => !faintY.includes(y)), 598, 805)} />
      <path stroke="#900" d="M642 235V306M695 242V385M672 330v11M665 341h16M665 373h16" />
      <path d="M507 146L598 268M455 146L598 337M443 215L646 487M443 178L486 146M453 237L531 180M482 285L565 224M512 327L598 264M515 331L598 267M547 374L598 337M570 406L581 399M590 442L605 432" />
      <path stroke="#006b12" d="M443 253L646 524M465 300L482 285M505 333L512 327M528 387L547 374M552 418L570 406M575 452L590 442" />
      <path stroke="#006b12" d={lines(topMarks.map(m => m[0]), 223, 253) + lines(bottomMarks.map(m => m[0]), 482, 513) + rows(gridY, 805, 836)} />
      <path stroke="#006b12" d="M598 233.500H805M598 243.500H805M814.500 253V482M824.500 253V482M598 493.500H805" />
    </g>
    <g fill="none" stroke="#006b12">
      {topMarks.map(([x]) => <circle key={x} cx={x} cy="213" r="10" />)}
      {bottomMarks.map(([x]) => <circle key={x} cx={x} cy="524" r="10" />)}
      {rightMarks.map(([y]) => <circle key={y} cx="846" cy={y} r="10" />)}
      {diagMarks.map(([x, y]) => <circle key={`${x}-${y}`} cx={x} cy={y} r="10" />)}
    </g>
    <Plan />
    <g fill="#fff" fontSize="15" textAnchor="middle">
      {topMarks.map(([x, t]) => <text key={x} x={x} y="218">{t}</text>)}
      {topDims.map(([x, t]) => <text key={x} x={x} y="244">{t}</text>)}
      <text x="701" y="234">30501</text>
      {bottomDims.map(([x, t]) => <text key={x} x={x} y="503">{t}</text>)}
      <text x="701" y="514">30501</text>
      {bottomMarks.map(([x, t]) => <text key={x} x={x} y="529">{t}</text>)}
      {rightMarks.map(([y, t]) => <text key={y} x="846" y={y + 5}>{t}</text>)}
      {gridY.slice(1).map((y, i) => (
        <text key={y} transform={`translate(826 ${Math.min(472, Math.max(261, (y + gridY[i]) / 2))}) rotate(-90)`}>{['3600', '1500', '3800', '4200', '1100', '2800'][i % 6]}</text>
      ))}
      <text transform="translate(837 368) rotate(-90)">33700</text>
      {diagMarks.map(([x, y, t]) => <text key={`${x}-${y}`} x={x} y={y + 5}>{t}</text>)}
      {diagDims.map(([x, y, t]) => <text key={`${x}-${y}`} transform={`translate(${x} ${y}) rotate(53)`} dy="5">{t}</text>)}
    </g>
    <path d="M487 567v-20" stroke="#00e000" strokeWidth="2" /><path d="M482 551l5-9 5 9z" fill="#00e000" />
    <path d="M487 567.500h20" stroke="#f00" strokeWidth="2" /><path d="M504 563l9 4.500-9 4.500z" fill="#f00" />
    <circle cx="487" cy="567" r="4.500" fill="#0000b4" />
    <text x="487" y="541" fontSize="13" textAnchor="middle" fill="#00e000">Y</text>
    <text x="518" y="572" fontSize="13" textAnchor="middle" fill="#f00">X</text>
  </svg>
);

const cube = 'M1 7l6-6h14v14l-5 6H1zM1 7h15v14M16 7l5-6';
const Canvas = () => (
  <CanvasArea>
    <Drawing />
    <ViewTools>
      <IconButton aria-label="动态观察">
        <svg width="22" height="22"><circle cx="11" cy="11" r="8" fill="#6f7a86" stroke="#252c35" /><path d="M3 13L18 8v5q-5 6-8 6z" fill="#3e4853" /><circle cx="18" cy="7" r="3" fill="#7c8792" stroke="#252c35" /><path d="M1 17L19 7" stroke="#252c35" strokeWidth="1.500" /></svg>
      </IconButton>
      <IconButton aria-label="三维"><svg width="22" height="22"><path d={cube} fill="#3c4654" stroke="#1c232c" /><text x="6" y="18" fontSize="7" fill="#10151c">3D</text></svg></IconButton>
      <IconButton aria-label="线框"><svg width="22" height="30"><path d={cube} fill="#758497" stroke="#1c232c" /><path d="M5 6h12v11H5z" fill="#8b97a5" stroke="#46515f" /><path d="M8 25h6l-3 3z" fill="#222" /></svg></IconButton>
      <IconButton aria-label="实体"><svg width="22" height="30"><path d={cube} fill="#3c4654" stroke="#1c232c" /><path d="M8 25h6l-3 3z" fill="#222" /></svg></IconButton>
      <IconButton aria-label="旋转"><svg width="22" height="30"><path d="M18 6a9 9 0 101 10M19 2v6h-6" fill="none" stroke="#222a34" strokeWidth="2" /><path d="M8 26h6l-3 3z" fill="#222" /></svg></IconButton>
      <svg width="21" height="2"><path d="M0 1h21" stroke="#2c3036" /></svg>
      <IconButton aria-label="显示设置">
        <svg width="22" height="22"><path d="M1 3l3-2h14l3 2v18H1z" fill="#3c4654" stroke="#1c232c" /><path d="M1 5h20M11 5v16M4 9h4M4 13h4M4 17h4M14 9h4M14 13h4M14 17h4" stroke="#161c24" strokeWidth="1.500" /></svg>
      </IconButton>
    </ViewTools>
  </CanvasArea>
);

/* ---------- status bar and taskbar ---------- */

const StatusBar = styled.footer`
  flex: none;
  display: flex;
  align-items: center;
  height: 27px;
  background: #dddde0;
  border-top: 1px solid #b4b6ba;
  color: #333;
`;
const StatusItem = styled.span<{ $width: number }>`
  flex: 0 0 ${p => p.$width}px;
`;
const StatusButton = styled.button<{ $active?: boolean }>`
  display: flex;
  align-items: center;
  gap: 4px;
  height: 22px;
  margin-right: 2px;
  padding: 0 3px;
  background: ${p => (p.$active ? '#fff' : '#cfcfd1')};
  border: 1px solid ${p => (p.$active ? '#4a9cf0' : '#a5a7aa')};
`;
const StatusText = styled(StatusButton)`
  padding: 0 4px;
`;
const Fps = styled.span`
  margin-left: auto;
  padding-right: 9px;
`;
const Taskbar = styled.div`
  flex: none;
  display: flex;
  height: 10px;
  overflow: hidden;
  border-top: 1px solid #37505f;
  background: linear-gradient(90deg, #3ba0bd, #52b3da 25%, #2d8ccb 42%, #1d66b1 60%, #12386e 78%, #0d2a58);
`;
const Pinned = styled.div`
  flex: 0 0 266px;
`;
const TaskButton = styled.button`
  flex: none;
  display: flex;
  justify-content: center;
  width: 51px;
  height: 20px;
  margin-right: 3px;
  background: rgba(255, 255, 255, .45);
  border: 1px solid #22506e;
  border-radius: 3px;
`;
const Clock = styled.time`
  margin-left: auto;
  padding: 0 31px 0 0;
  color: #fff;
`;

const Status = () => (
  <StatusBar>
    <StatusItem $width={177}>X = -212 Y = 12727</StatusItem>
    <StatusItem $width={73}>层高： 3</StatusItem>
    <StatusItem $width={117}>标高: -0.05~2.95</StatusItem>
    <StatusItem $width={91}>0</StatusItem>
    <StatusItem $width={70}>隐藏： 0</StatusItem>
    <StatusButton aria-label="正交"><Icon name="ortho" /></StatusButton>
    <StatusButton aria-label="捕捉" $active><Icon name="snapRect" /><Caret /></StatusButton>
    <StatusButton aria-label="交点"><Icon name="crossX" /></StatusButton>
    <StatusButton aria-label="角度"><Icon name="angle" /><Caret /></StatusButton>
    <StatusButton aria-label="动态输入"><Icon name="plusMinus" /><Caret /></StatusButton>
    <StatusText>跨图层选择</StatusText>
    <StatusText>折线选择</StatusText>
    指定第一点
    <Fps>28.5714 FPS</Fps>
  </StatusBar>
);

const System = () => (
  <Taskbar>
    <Pinned>
      <svg width="266" height="9">
        <circle cx="21" cy="14" r="13" fill="#dfe6ea" stroke="#8b9aa3" /><path d="M13 9q8-8 15 0l-3 2H14z" fill="#c7452f" />
        <path d="M60 10q8-11 21-5l-4 2q-8-2-10 3z" fill="#1d7fd8" /><path d="M116 9V6q0-3 3-3h22l-10 6z" fill="#3fa4ee" /><path d="M121 9l18-6-8 6z" fill="#eaf6ff" />
        <path d="M172 9q4-8 12-6l-3 6z" fill="#29a746" /><path d="M183 3q8 0 11 6h-14z" fill="#f3c41e" /><path d="M224 4q9-2 16 5h-16z" fill="#7fd42d" />
      </svg>
    </Pinned>
    <TaskButton aria-label="浏览器"><svg width="26" height="9"><path d="M3 10q7-11 19-6l-2 5-5-2-4 3z" fill="#2e8fe0" /><path d="M4 9Q16-2 24 3" fill="none" stroke="#f2c230" strokeWidth="2" /></svg></TaskButton>
    <TaskButton aria-label="资源管理器"><svg width="26" height="9"><path d="M1 3h11l2 2h11v4H1z" fill="#f2d485" /><path d="M3 3h4v3H3z" fill="#35a34b" /><path d="M12 4h4v3h-4z" fill="#c83b2e" /></svg></TaskButton>
    <TaskButton aria-label="土建计量"><svg width="28" height="9"><path d="M0 9V5q0-4 4-4h20q4 0 4 4v4z" fill="#4f9bf6" /><path d="M8 9q6-4 12-4l-5 4z" fill="#fff" /></svg></TaskButton>
    <TaskButton aria-label="文字处理"><svg width="26" height="9"><path d="M1 9V4q0-3 3-3h18q3 0 3 3v5z" fill="#eaf3fc" stroke="#2d6db5" /><path d="M5 4l2 5 3-5 3 5M16 4h6" fill="none" stroke="#164f9c" strokeWidth="2" /></svg></TaskButton>
    <Clock>15:33</Clock>
  </Taskbar>
);

/* ---------- overlays ---------- */

const Pointer = styled.svg`
  position: absolute;
  left: 190px;
  top: 70px;
  pointer-events: none;
`;
const CloseViewer = styled.button`
  position: absolute;
  top: 3px;
  right: 14px;
  width: 33px;
  height: 33px;
  border-radius: 50%;
  background: #38393b;
`;

export default function App() {
  return (
    <>
      <GlobalStyle />
      <Page>
        <Program>
          <TopBar />
          <Ribbon />
          <Filters />
          <Workspace>
            <ComponentTree />
            <Panels />
            <Splitter />
            <Canvas />
          </Workspace>
          <Status />
          <System />
        </Program>
        <Backdrop>
          <svg width="9" height="50"><path d="M2 8q4 3 3 8M1 26h8M2 31h7M0 46q6-2 9-8" fill="none" stroke="#7d2027" strokeWidth="2" /></svg>
        </Backdrop>
        <Pointer width="80" height="74" viewBox="190 70 80 74"><path d="M197 74l25 7-5 6 47 52-53-46-7 5z" fill="#fb3d38" /></Pointer>
        <CloseViewer aria-label="关闭">
          <svg width="33" height="33"><path d="M9.500 9.500l14 14M23.500 9.500l-14 14" stroke="#fff" strokeWidth="2.500" strokeLinecap="round" /></svg>
        </CloseViewer>
      </Page>
    </>
  );
}
